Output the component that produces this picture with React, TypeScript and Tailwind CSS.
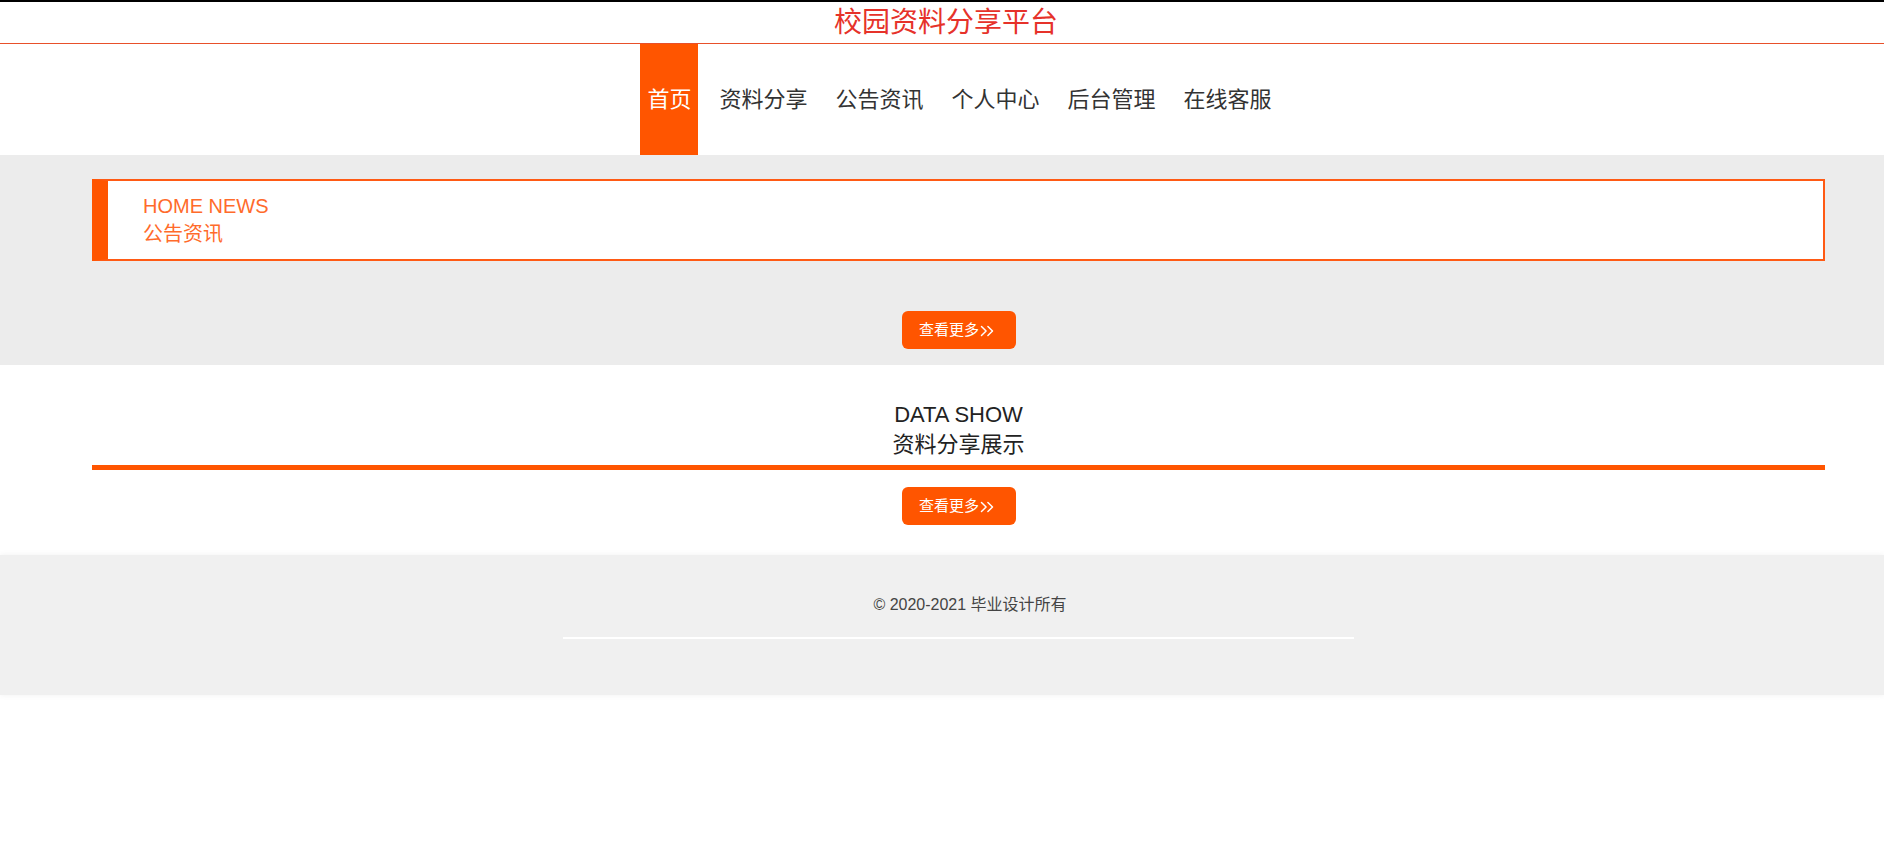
import React from 'react';
import { ChevronsRight } from 'lucide-react';

const font = { fontFamily: '"Liberation Sans", "Noto Sans CJK SC", Arial, sans-serif' };

const navItems = ['首页', '资料分享', '公告资讯', '个人中心', '后台管理', '在线客服'];

function MoreButton() {
  return (
    <button className="flex items-center justify-center w-[114px] h-[38px] rounded-[6px] bg-[#ff5500] text-white text-[15px] pt-[1px]">
      <span>查看更多</span>
      <ChevronsRight className="w-[22px] h-[22px] -ml-[3px]" strokeWidth={1.6} />
    </button>
  );
}

export default function App() {
  return (
    <div className="min-h-screen bg-white" style={font}>
      {/* Site title */}
      <div className="border-t-2 border-black border-b border-b-[#e8502a] h-[44px] flex items-center justify-center pl-[8px]">
        <h1 className="text-[28px] leading-none text-[#e6322a]">校园资料分享平台</h1>
      </div>

      {/* Main navigation */}
      <nav className="h-[111px] flex justify-center pl-[94px] pr-[59px]">
        <ul className="flex gap-[14px]">
          {navItems.map((item, i) => (
            <li
              key={item}
              className={`flex items-center px-[7px] text-[22px] ${
                i === 0 ? 'bg-[#ff5500] text-white' : 'text-[#333333]'
              }`}
            >
              {item}
            </li>
          ))}
        </ul>
      </nav>

      {/* Notice section */}
      <section className="bg-[#ececec] pt-[24px] pb-[16px] pl-[92px] pr-[59px]">
        <div className="h-[82px] border-2 border-[#ff5a14] border-l-[16px] border-l-[#ff5500] bg-white flex flex-col justify-center pl-[35px] text-[20px] leading-[28px] text-[#ff6b2b]">
          <div>HOME NEWS</div>
          <div>公告资讯</div>
        </div>
        <div className="flex justify-center mt-[50px]">
          <MoreButton />
        </div>
      </section>

      {/* Data show section */}
      <section className="pt-[35px] pb-[30px] pl-[92px] pr-[59px]">
        <div className="text-center text-[22px] leading-[30px] text-[#222222]">
          <div>DATA SHOW</div>
          <div>资料分享展示</div>
        </div>
        <div className="h-[5px] bg-[#ff5500] mt-[5px]" />
        <div className="flex justify-center mt-[17px]">
          <MoreButton />
        </div>
      </section>

      {/* Footer */}
      <footer className="bg-[#f0f0f0] shadow-[0_0_6px_rgba(0,0,0,0.06)] pt-[38px] pb-[56px] pl-[92px] pr-[59px]">
        <p className="text-center text-[16px] leading-[24px] text-[#444444] pl-[23px]">© 2020-2021 毕业设计所有</p>
        <div className="mx-auto mt-[20px] h-[2px] w-[791px] bg-white" />
      </footer>
    </div>
  );
}
